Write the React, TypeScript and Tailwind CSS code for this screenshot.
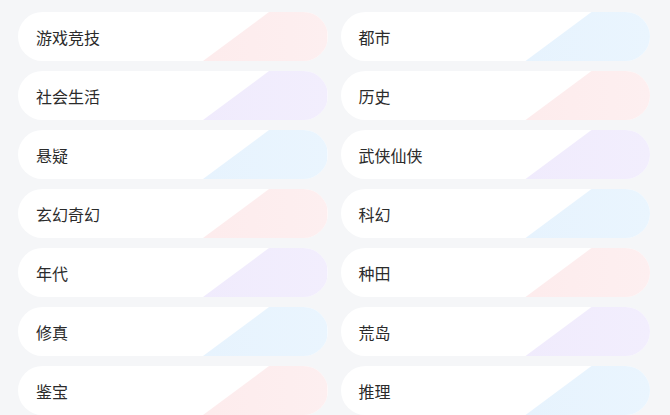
const tones = {
  red: 'bg-linear-to-r from-[#fde7e8] to-[#fdeff0]',
  purple: 'bg-linear-to-r from-[#ede7fc] to-[#f2eefd]',
  blue: 'bg-linear-to-r from-[#e2f0fd] to-[#eaf5fe]',
} as const;

type Tone = keyof typeof tones;

const genres: { name: string; tone: Tone }[] = [
  { name: '游戏竞技', tone: 'red' },
  { name: '都市', tone: 'blue' },
  { name: '社会生活', tone: 'purple' },
  { name: '历史', tone: 'red' },
  { name: '悬疑', tone: 'blue' },
  { name: '武侠仙侠', tone: 'purple' },
  { name: '玄幻奇幻', tone: 'red' },
  { name: '科幻', tone: 'blue' },
  { name: '年代', tone: 'purple' },
  { name: '种田', tone: 'red' },
  { name: '修真', tone: 'blue' },
  { name: '荒岛', tone: 'purple' },
  { name: '鉴宝', tone: 'red' },
  { name: '推理', tone: 'blue' },
];

function GenreCard({ name, tone }: { name: string; tone: Tone }) {
  return (
    <div className="relative h-[49px] overflow-hidden rounded-full bg-white">
      {/* slanted colour block */}
      <div
        className={`absolute inset-0 ${tones[tone]} [clip-path:polygon(251px_0,100%_0,100%_100%,185px_100%)]`}
      />
      <div className="relative flex h-full items-center pl-[18px] text-[16px] text-[#2b2b2b]">
        {name}
      </div>
    </div>
  );
}

export default function App() {
  return (
    <div
      className="h-[415px] w-[670px] overflow-hidden bg-[#f5f6f8]"
      style={{ fontFamily: '"Noto Sans CJK SC", "Noto Sans", sans-serif' }}
    >
      <div className="grid grid-cols-2 gap-x-[13px] gap-y-[10px] pl-[18px] pr-[20px] pt-[12px]">
        {genres.map(g => (
          <GenreCard key={g.name} name={g.name} tone={g.tone} />
        ))}
      </div>
    </div>
  );
}
